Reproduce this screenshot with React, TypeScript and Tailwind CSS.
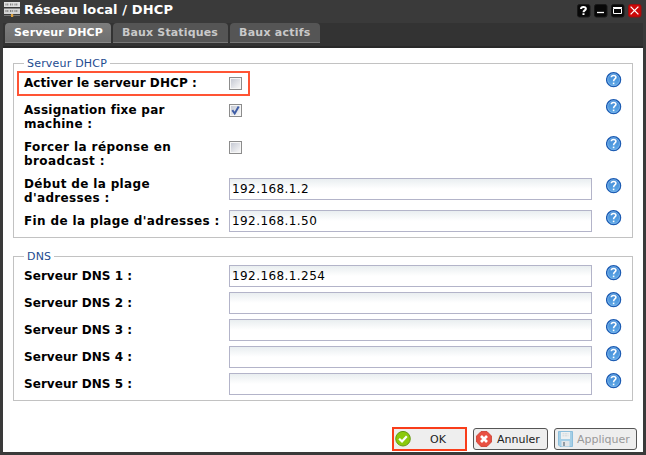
import React from "react";

function HelpIcon() {
  return (
    <svg width="16" height="16" viewBox="0 0 16 16" className="block shrink-0">
      <defs>
        <linearGradient id="help" x1="0" y1="0" x2="0" y2="1">
          <stop offset="0" stopColor="#3f87d4" />
          <stop offset="1" stopColor="#5faae8" />
        </linearGradient>
      </defs>
      <circle cx="7.6" cy="7.7" r="7" fill="url(#help)" stroke="#1c5bb2" strokeWidth="1.3" />
      <circle cx="7.6" cy="7.7" r="5.9" fill="none" stroke="#7fb5ea" strokeWidth="0.8" />
      <path d="M5.3 5.3C5.4 2.8 9.9 2.8 9.9 5.3C9.9 7 7.6 7 7.6 9.3" fill="none" stroke="#fff" strokeWidth="1.6" />
      <rect x="6.8" y="10.6" width="1.6" height="1.6" fill="#fff" />
    </svg>
  );
}

function Checkbox({ checked = false }: { checked?: boolean }) {
  return (
    <div className="mt-[5px] h-[13px] w-[13px] border border-[#8c8c8c] bg-[#f6f6f6] p-px">
      <svg width="9" height="9" viewBox="0 0 9 9" className="block overflow-visible">
        <defs>
          <linearGradient id="box" x1="0" y1="0" x2="1" y2="1">
            <stop offset="0" stopColor="#c6cad4" />
            <stop offset="1" stopColor="#f7f7f7" />
          </linearGradient>
        </defs>
        <rect width="9" height="9" fill="url(#box)" />
        {checked && <path d="M1.3 4.2L3.7 7.5L7.7 0.4" fill="none" stroke="#3f5da6" strokeWidth="2" />}
      </svg>
    </div>
  );
}

function Field({ value = "" }: { value?: string }) {
  return (
    <div className="h-[22px] w-[363px] border border-[#b3b4c9] bg-linear-to-b from-[#e9eef0] to-white to-50% pl-[2px] text-[12px] leading-[20px] tracking-[0.42px] whitespace-nowrap text-black">
      {value}
    </div>
  );
}

function Row({ label, children, height, inset = "", tracking = "tracking-[0.4px]" }: { label: React.ReactNode; children: React.ReactNode; height: string; inset?: string; tracking?: string }) {
  return (
    <div className={`flex items-start ${height}`}>
      <div className={`w-[205px] shrink-0 pt-[4px] text-[12px] leading-[14px] font-bold whitespace-nowrap text-black ${tracking}`}>{label}</div>
      <div className={`w-[377px] shrink-0 ${inset}`}>{children}</div>
      <div className={inset}><HelpIcon /></div>
    </div>
  );
}

function Group({ title, className, children }: { title: string; className: string; children: React.ReactNode }) {
  return (
    <section className={`relative border border-[#c2c2c2] pt-[8px] pl-[10px] ${className}`}>
      <div className="absolute -top-[8px] left-[10px] h-[14px] bg-white pr-[3px] pl-[3px] text-[11px] leading-[15px] tracking-[0.2px] whitespace-nowrap text-[#234b90]">{title}</div>
      {children}
    </section>
  );
}

function WindowButton({ kind }: { kind: "help" | "min" | "max" | "close" }) {
  return (
    <svg width="14" height="14" viewBox="0 0 14 14" className="block">
      <rect x="0.5" y="0.5" width="12.5" height="12.5" rx="2" fill={kind === "close" ? "#cc0808" : "#080808"} stroke={kind === "close" ? "#981010" : "#181818"} />
      {kind === "help" && <path d="M4 5C4 2.4 8.9 2.4 8.9 4.7C8.9 6.4 6.5 6.3 6.5 8.2M6.5 9.2V11" fill="none" stroke="#fff" strokeWidth="2" />}
      {kind === "min" && <path d="M3 8.5H10" stroke="#fff" strokeWidth="1.3" />}
      {kind === "max" && <path d="M2.5 4.5H10.5V9.5H2.5ZM2 3.5H11" fill="none" stroke="#fff" strokeWidth="1" />}
      {kind === "close" && <path d="M2.6 2.6L10.4 10.4M10.4 2.6L2.6 10.4" stroke="#fff" strokeWidth="1.3" />}
    </svg>
  );
}

function NetworkIcon() {
  return (
    <svg width="16" height="16" viewBox="0 0 16 16" className="block">
      <rect x="0" y="0" width="16" height="5" fill="#e0e0e0" />
      <rect x="0" y="6.5" width="16" height="5.5" fill="#d4d4d4" />
      <path d="M1.5 2.5H5M6 2.5H9.5M10.5 2.5H14M1.5 9H5M6 9H9.5M10.5 9H14" stroke="#808080" strokeWidth="2" strokeDasharray="1 .7" />
      <path d="M0 13.5H16" stroke="#777" />
      <rect x="7" y="12" width="2.2" height="3" fill="#dfa23d" />
    </svg>
  );
}

function OkIcon() {
  return (
    <svg width="16" height="16" viewBox="0 0 16 16" className="shrink-0">
      <circle cx="8" cy="7.7" r="7.3" fill="#8bc90c" stroke="#659913" strokeWidth="1" />
      <path d="M4.1 7.7L7 10.4L11.8 5.2" fill="none" stroke="#fff" strokeWidth="2.2" />
    </svg>
  );
}

function CancelIcon() {
  return (
    <svg width="16" height="16" viewBox="0 0 16 16" className="shrink-0">
      <path d="M5 .6H11L15.4 5V11L11 15.4H5L.6 11V5Z" fill="#e95143" stroke="#cf4639" />
      <path d="M5 5L11 11M11 5L5 11" stroke="#fff" strokeWidth="2.7" />
    </svg>
  );
}

function SaveIcon() {
  return (
    <svg width="15" height="16" viewBox="0 0 15 16" className="shrink-0">
      <path d="M.5 .5H14.5V15.5H2L.5 14Z" fill="#a5cfe6" stroke="#8dbfdc" />
      <rect x="3" y="1" width="9" height="7" fill="#eef1f2" />
      <path d="M4.5 2.8H10.5M4.5 4.8H10.5" stroke="#d2d8da" strokeDasharray="2 .5" />
      <rect x="3.5" y="10" width="8" height="5.5" fill="#e2e5e7" />
      <rect x="5" y="11" width="2" height="4" fill="#929ca4" />
    </svg>
  );
}

export default function App() {
  return (
    <div className="flex h-[455px] w-[646px] flex-col overflow-hidden bg-[#3a3a3a] font-['DejaVu_Sans',sans-serif]">
      <header className="flex h-[23px] shrink-0 items-start pl-[4px]">
        <div className="pt-[2px]"><NetworkIcon /></div>
        <h1 className="mt-[1px] ml-[4px] flex-1 text-[13px] leading-[17px] font-bold tracking-[0.12px] whitespace-nowrap text-white">Réseau local / DHCP</h1>
        <div className="flex gap-[3px] pt-[4px] pr-[4px]">
          <WindowButton kind="help" /><WindowButton kind="min" /><WindowButton kind="max" /><WindowButton kind="close" />
        </div>
      </header>
      <nav className="mr-[3px] ml-[3px] flex h-[25px] shrink-0 items-start gap-[2px] border-b-2 border-[#292929] bg-[#333] pl-[2px] text-[11px] leading-[19px] font-bold text-[#c9c9c9]">
        <div className="h-[20px] w-[106px] rounded-t-[4px] border-b border-[#888] bg-linear-to-b from-[#7d7d7d] to-[#6f6f6f] pl-[9px] tracking-[0.17px] whitespace-nowrap text-white">Serveur DHCP</div>
        <div className="h-[20px] w-[115px] rounded-t-[4px] border-b border-[#777] bg-[#555] pl-[9px] tracking-[0.15px] whitespace-nowrap">Baux Statiques</div>
        <div className="h-[20px] w-[90px] rounded-t-[4px] border-b border-[#777] bg-[#555] pl-[9px] tracking-[0.25px] whitespace-nowrap">Baux actifs</div>
      </nav>
      <main className="mx-[3px] flex h-[404px] shrink-0 flex-col bg-white px-[10px] pt-[15px]">
        <Group title="Serveur DHCP" className="h-[175px] shrink-0">
          <div className="absolute top-[7px] left-[3px] h-[25px] w-[233px] border-2 border-[#ff5434]" />
          <Row label="Activer le serveur DHCP :" height="h-[27px]" tracking="tracking-[0.07px]"><Checkbox /></Row>
          <Row label={<>Assignation fixe par<br />machine :</>} height="h-[37px]" tracking="tracking-[0.25px]"><Checkbox checked /></Row>
          <Row label={<>Forcer la réponse en<br />broadcast :</>} height="h-[37px]"><Checkbox /></Row>
          <Row label={<>Début de la plage<br />d'adresses :</>} height="h-[37px]" inset="pt-[5px]" tracking="tracking-[0.35px]"><Field value="192.168.1.2" /></Row>
          <Row label="Fin de la plage d'adresses :" height="h-[27px]" tracking="tracking-[0.36px]"><Field value="192.168.1.50" /></Row>
        </Group>
        <Group title="DNS" className="mt-[18px] h-[145px] shrink-0">
          {["192.168.1.254", "", "", "", ""].map((value, i) => (
            <Row key={i} label={`Serveur DNS ${i + 1} :`} height="h-[27px]" tracking="tracking-[0.05px]"><Field value={value} /></Row>
          ))}
        </Group>
        <footer className="mt-[26px] -mr-[4px] flex items-start justify-end gap-[6px] text-[11px] leading-[21px] text-[#222]">
          <button className="flex h-[24px] w-[75px] items-center border-2 border-[#f93d1a] bg-[#eee] pl-[1px]"><OkIcon /><span className="flex-1 text-center">OK</span></button>
          <button className="mt-[1px] flex h-[22px] w-[75px] items-center rounded-[3px] border border-[#555] bg-[#eee] pl-[2px]"><CancelIcon /><span className="pl-[5px]">Annuler</span></button>
          <button className="mt-[1px] flex h-[22px] w-[83px] items-center rounded-[3px] border border-[#555] bg-[#eee] pl-[3px] text-[#999]"><SaveIcon /><span className="pl-[4px]">Appliquer</span></button>
        </footer>
      </main>
    </div>
  );
}
